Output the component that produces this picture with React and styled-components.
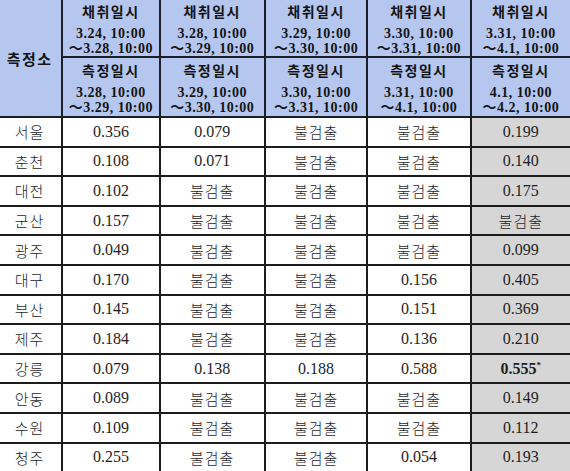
import React from 'react';
import styled, { createGlobalStyle } from 'styled-components';

const GlobalStyle = createGlobalStyle`
  html, body {
    margin: 0;
    padding: 0;
    background: #ffffff;
  }
  body {
    font-family: "Liberation Serif", "Noto Sans CJK KR", serif;
    color: #1a1a1a;
  }
`;

const periods = [
  { take: ['3.24, 10:00', '～3.28, 10:00'], measure: ['3.28, 10:00', '～3.29, 10:00'] },
  { take: ['3.28, 10:00', '～3.29, 10:00'], measure: ['3.29, 10:00', '～3.30, 10:00'] },
  { take: ['3.29, 10:00', '～3.30, 10:00'], measure: ['3.30, 10:00', '～3.31, 10:00'] },
  { take: ['3.30, 10:00', '～3.31, 10:00'], measure: ['3.31, 10:00', '～4.1, 10:00'] },
  { take: ['3.31, 10:00', '～4.1, 10:00'], measure: ['4.1, 10:00', '～4.2, 10:00'] },
];

const ND = '불검출';

const rows = [
  ['서울', '0.356', '0.079', ND, ND, '0.199'],
  ['춘천', '0.108', '0.071', ND, ND, '0.140'],
  ['대전', '0.102', ND, ND, ND, '0.175'],
  ['군산', '0.157', ND, ND, ND, ND],
  ['광주', '0.049', ND, ND, ND, '0.099'],
  ['대구', '0.170', ND, ND, '0.156', '0.405'],
  ['부산', '0.145', ND, ND, '0.151', '0.369'],
  ['제주', '0.184', ND, ND, '0.136', '0.210'],
  ['강릉', '0.079', '0.138', '0.188', '0.588', '0.555*'],
  ['안동', '0.089', ND, ND, ND, '0.149'],
  ['수원', '0.109', ND, ND, ND, '0.112'],
  ['청주', '0.255', ND, ND, '0.054', '0.193'],
];

const widths = [64, 97, 105, 102, 103, 99];

function Value({ text }) {
  if (text.endsWith('*')) {
    return (
      <Strong>
        {text.slice(0, -1)}
        <sup>*</sup>
      </Strong>
    );
  }
  return <>{text}</>;
}

function App() {
  return (
    <>
      <GlobalStyle />
      <Frame>
        <Table>
          <colgroup>
            {widths.map((w, i) => (
              <col key={i} style={{ width: w }} />
            ))}
          </colgroup>
          <thead>
            <tr>
              <HeadCell rowSpan={2} $station>측정소</HeadCell>
              {periods.map((p, i) => (
                <HeadCell key={i} $top>
                  <Title>채취일시</Title>
                  <Dates>
                    {p.take[0]}
                    <br />
                    {p.take[1]}
                  </Dates>
                </HeadCell>
              ))}
            </tr>
            <tr>
              {periods.map((p, i) => (
                <HeadCell key={i}>
                  <Title>측정일시</Title>
                  <Dates>
                    {p.measure[0]}
                    <br />
                    {p.measure[1]}
                  </Dates>
                </HeadCell>
              ))}
            </tr>
          </thead>
          <tbody>
            {rows.map((r) => (
              <tr key={r[0]}>
                {r.map((v, i) => (
                  <Cell key={i} $first={i === 0} $shaded={i === 5} $korean={v === ND || i === 0}>
                    <Value text={v} />
                  </Cell>
                ))}
              </tr>
            ))}
          </tbody>
        </Table>
      </Frame>
    </>
  );
}

const Frame = styled.div`
  width: 570px;
  height: 471px;
  overflow: hidden;
  background: #ffffff;
`;

const Table = styled.table`
  border-collapse: collapse;
  table-layout: fixed;
  width: 572px;
  margin-left: -2px;
  margin-top: -2px;

  td:last-child,
  th:last-child {
    border-right: none;
  }
`;

const HeadCell = styled.th`
  background: #b5c6ef;
  border: 2px solid #1c1f2a;
  padding: 0;
  height: ${(p) => (p.$top ? '55px' : '58px')};
  text-align: center;
  vertical-align: middle;
  font-weight: 700;
  color: #141414;
  ${(p) =>
    p.$station &&
    `
    font-family: "Noto Sans CJK KR", sans-serif;
    font-size: 15px;
    letter-spacing: 1.5px;
    border-left: none;
  `}
`;

const Title = styled.div`
  font-family: "Noto Sans CJK KR", sans-serif;
  font-size: 14px;
  font-weight: 700;
  letter-spacing: 1.5px;
  line-height: 22px;
  padding-bottom: 4px;
`;

const Dates = styled.div`
  font-family: "Liberation Serif", "Noto Sans CJK KR", serif;
  font-size: 14px;
  font-weight: 700;
  letter-spacing: 0.5px;
  line-height: 15px;
  white-space: nowrap;
`;

const Cell = styled.td`
  border: 2px solid #1c1c1c;
  border-left: ${(p) => (p.$first ? 'none' : '2px solid #1c1c1c')};
  background: ${(p) => (p.$shaded ? '#d6d6d6' : '#ffffff')};
  height: 27.6px;
  padding: 0;
  text-align: center;
  vertical-align: middle;
  font-family: ${(p) =>
    p.$korean ? '"Noto Sans CJK KR", sans-serif' : '"Liberation Serif", serif'};
  font-size: ${(p) => (p.$korean ? '15px' : '16px')};
  font-weight: ${(p) => (p.$korean ? 300 : 400)};
  letter-spacing: ${(p) => (p.$korean ? '1px' : '0')};
  color: #1e1e1e;
`;

const Strong = styled.span`
  font-weight: 700;
  sup {
    font-size: 9px;
    line-height: 0;
  }
`;

export default App;
